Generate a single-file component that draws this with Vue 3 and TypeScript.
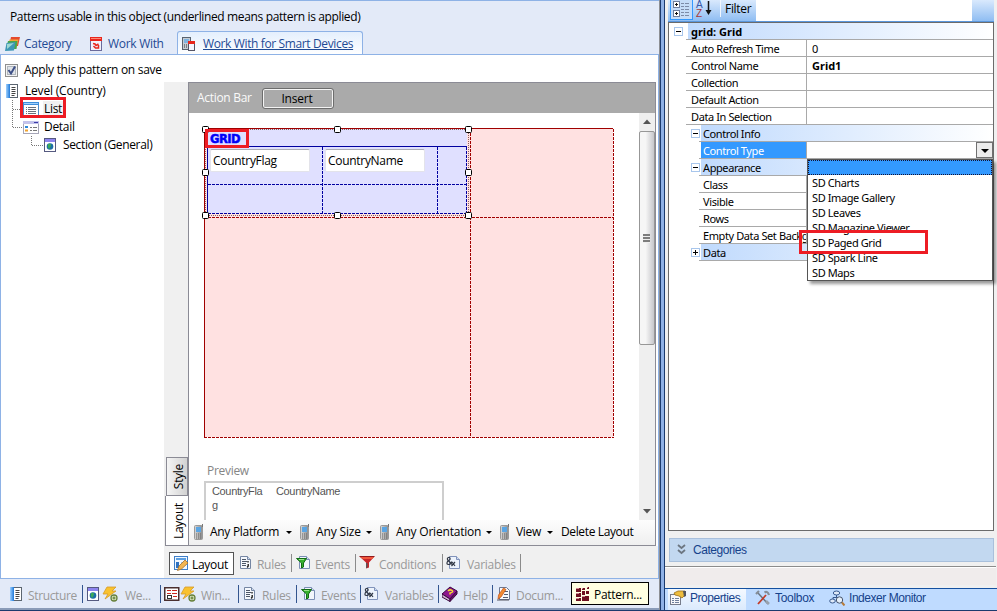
<script setup lang="ts">
interface PropertyRow {
  name: string
  value?: string
  level: 1 | 2
  group?: 'open' | 'closed'
  root?: boolean
  selected?: boolean
}

interface DocTab {
  key: string
  label: string
  icons: string[]
}

const rows: PropertyRow[] = [
  { name: 'grid: Grid', level: 1, group: 'open', root: true },
  { name: 'Auto Refresh Time', value: '0', level: 1 },
  { name: 'Control Name', value: 'Grid1', level: 1 },
  { name: 'Collection', level: 1 },
  { name: 'Default Action', level: 1 },
  { name: 'Data In Selection', level: 1 },
  { name: 'Control Info', level: 2, group: 'open' },
  { name: 'Control Type', level: 2, selected: true },
  { name: 'Appearance', level: 2, group: 'open' },
  { name: 'Class', level: 2 },
  { name: 'Visible', level: 2 },
  { name: 'Rows', level: 2 },
  { name: 'Empty Data Set Background', level: 2 },
  { name: 'Data', level: 2, group: 'closed' },
]

const controlTypes: string[] = [
  '', 'SD Charts', 'SD Image Gallery', 'SD Leaves', 'SD Magazine Viewer',
  'SD Paged Grid', 'SD Spark Line', 'SD Maps',
]

const partTabs: DocTab[] = [
  { key: 'rules', label: 'Rules', icons: ['rules'] },
  { key: 'events', label: 'Events', icons: ['events'] },
  { key: 'conditions', label: 'Conditions', icons: ['funnel'] },
  { key: 'variables', label: 'Variables', icons: ['vars'] },
]

const docTabs: DocTab[] = [
  { key: 'structure', label: 'Structure', icons: ['book'] },
  { key: 'web', label: 'We...', icons: ['webform', 'bolt'] },
  { key: 'win', label: 'Win...', icons: ['winform', 'bolt'] },
  { key: 'rules', label: 'Rules', icons: ['rules'] },
  { key: 'events', label: 'Events', icons: ['events'] },
  { key: 'variables', label: 'Variables', icons: ['vars'] },
  { key: 'help', label: 'Help', icons: ['help'] },
  { key: 'docum', label: 'Docum...', icons: ['doc'] },
]

const handles: [number, number][] = [
  [3, 3], [135, 3], [266, 3], [3, 46], [266, 46], [3, 89], [135, 89], [266, 89],
]
</script>

<template>
  <div class="app">
    <svg class="sprites" width="0" height="0">
      <defs>
        <linearGradient id="gPhone" x1="0" x2="1"><stop offset="0" stop-color="#d8d8d8" /><stop offset="1" stop-color="#8b8b8b" /></linearGradient>
        <linearGradient id="gBlue" x1="0" x2="1"><stop offset="0" stop-color="#9fd0ff" /><stop offset="1" stop-color="#1d78d8" /></linearGradient>
      </defs>
      <symbol id="i-category" viewBox="0 0 16 16">
        <path d="M6 1h9l-2 9H4z" fill="#e5492d" /><path d="M4.500 3.500h9l-2 8H3z" fill="#f3a53a" />
        <path d="M3 5h9.500l-1 8H1z" fill="#4aa64a" /><path d="M1.500 7l9-1-1.500 8.500L0 15z" fill="#3f97b5" /><path d="M2 8l7-1-7 6z" fill="#9fd8d2" />
      </symbol>
      <symbol id="i-workwith" viewBox="0 0 16 16">
        <rect x="1.500" y="1.500" width="11" height="13" fill="#f2f2fb" stroke="#6b6b9b" /><rect x="1" y="1" width="12" height="4" fill="#e8261c" /><path d="M2 2.500h10" stroke="#ff8b78" />
        <path d="M4 7.500l2 .5 1 1.500 2.500-1.500M4.500 10l2 2h3V9" fill="none" stroke="#e8261c" stroke-width="1.500" />
      </symbol>
      <symbol id="i-smart" viewBox="0 0 16 16">
        <rect x="1.500" y="1.500" width="8" height="12" fill="#c5ccd4" stroke="#59636f" /><rect x="3" y="3" width="5" height="4" fill="#7fb2e0" />
        <path d="M3 9h1m1 0h1M3 11h1m1 0h1" stroke="#333" /><rect x="7.500" y="5.500" width="6" height="9" fill="#f4f6ff" stroke="#556" /><rect x="7" y="5" width="7" height="3" fill="#e8261c" />
      </symbol>
      <symbol id="i-book" viewBox="0 0 16 16">
        <rect x="1.500" y="1.500" width="11" height="13" fill="#fff" stroke="#5b6570" /><rect x="1" y="1" width="4" height="14" fill="url(#gBlue)" />
        <path d="M6.500 4.500h4M6.500 6.500h4M6.500 8.500h4M6.500 10.500h4M6.500 12.500h3" stroke="#444" />
      </symbol>
      <symbol id="i-list" viewBox="0 0 16 16">
        <rect x=".5" y="1.500" width="15" height="13" fill="#fff" stroke="#4f8cc9" /><rect x="0" y="1" width="16" height="3" fill="#3f8fdc" /><path d="M1 2.500h14" stroke="#9fd0fa" />
        <path d="M3 6.500h1M3 8.500h1M3 10.500h1M3 12.500h1M5 6.500h8M5 8.500h8M5 10.500h8M5 12.500h8" stroke="#6a717b" />
      </symbol>
      <symbol id="i-detail" viewBox="0 0 16 16">
        <rect x=".5" y="2.500" width="15" height="12" fill="#fff" stroke="#a6a6b8" /><rect x="0" y="2" width="16" height="3" fill="#c2c2ea" /><path d="M11 3.500h4" stroke="#3b3ba8" />
        <path d="M2 8h3" stroke="#2b86d8" stroke-width="2" /><path d="M2 11.500h3" stroke="#efa22f" stroke-width="2" /><path d="M7 8.500h2m1 0h4M7 11.500h2m1 0h4" stroke="#777" />
      </symbol>
      <symbol id="i-webform" viewBox="0 0 16 16">
        <rect x="1.500" y="1.500" width="11" height="13" fill="#fff" stroke="#555a80" /><rect x="2" y="2" width="10" height="3" fill="#8d84ee" />
        <circle cx="7" cy="9.500" r="3.300" fill="#1c6fa6" /><path d="M5 7q3-1 3 1t-2 4q-2-2-1-5z" fill="#3ba95a" />
      </symbol>
      <symbol id="i-winform" viewBox="0 0 16 16">
        <rect x=".75" y="1.750" width="14" height="12.500" fill="#fff" stroke="#4a2f2f" stroke-width="1.500" /><path d="M3 4.500h4m1 0h5M3 7.500h4m1 0h5" stroke="#cc2a20" stroke-width="1.200" />
        <rect x="3.500" y="9.500" width="4" height="3" fill="#fff" stroke="#333" /><path d="M9 10.500h4" stroke="#cc2a20" />
      </symbol>
      <symbol id="i-bolt" viewBox="0 0 16 16">
        <path d="M5 1h9l-4 4h4L3 13l3-5H1z" fill="#f9c22f" stroke="#d69a2a" stroke-width=".8" />
        <circle cx="12" cy="12" r="3" fill="#f0f6da" stroke="#66803a" stroke-width="1.300" /><path d="M12 10.300v3.400M10.300 12h3.400" stroke="#517020" />
      </symbol>
      <symbol id="i-rules" viewBox="0 0 16 16">
        <path d="M1.500 1.500h7l3 3v9h-10z" fill="#f5f8fd" stroke="#7586a3" /><path d="M8.500 1.500v3h3" fill="#cfdcf0" stroke="#7586a3" />
        <path d="M3 4.500h4M3 6.500h5M3 8.500h4M3 10.500h4" stroke="#4d5768" /><path d="M9 6v1.500M9.200 9v2l-1 1.500" stroke="#222" stroke-width="1.400" fill="none" />
      </symbol>
      <symbol id="i-events" viewBox="0 0 16 16">
        <path d="M3.500 1.500h7l3 3v9h-10z" fill="#f2f6fc" stroke="#7b8fb5" /><path d="M10.500 1.500v3h3" fill="#cfdcf0" stroke="#7b8fb5" />
        <path d="M.5 3.500h10L7.500 8v4l-2 1V8z" fill="#36b02d" stroke="#116b16" /><path d="M3 4.500h5" stroke="#9be58b" />
      </symbol>
      <symbol id="i-funnel" viewBox="0 0 16 16">
        <path d="M.5 1.500h15L10 7.500v5l-3 1v-6z" fill="#c8262b" /><path d="M1 2h14l-2 2H4z" fill="#f0563a" /><path d="M7 8v5l1.500-.5V8z" fill="#5a5458" /><path d="M.5 1.500h15" stroke="#8f1a1e" />
      </symbol>
      <symbol id="i-vars" viewBox="0 0 16 16">
        <path d="M4.500 1.500h7l3 3v9h-10z" fill="#edf3fc" stroke="#8193bb" /><path d="M11.500 1.500v3h3" fill="#cfdcf0" stroke="#8193bb" />
        <path d="M7 9.500Q5 7 3 5.500 1.500 3 3.500 2.500t1.500 2L2.500 6.500Q1 9.500 3.500 9.500T7 6.500M6.500 11l3.500-4M7 7l3 4" fill="none" stroke="#333a48" stroke-width="1.200" />
      </symbol>
      <symbol id="i-help" viewBox="0 0 16 16">
        <path d="M0 8l8-7 7 4-7 8z" fill="#8d178d" stroke="#3d083f" /><path d="M0 8l8 5v2.500L0 11z" fill="#cfb8d2" stroke="#3d083f" /><path d="M8 13l7-8v3l-7 7.500z" fill="#65106a" stroke="#3d083f" />
        <path d="M6 5q2-2 4-.5T8 7v1.500" stroke="#f6dc31" stroke-width="1.500" fill="none" />
      </symbol>
      <symbol id="i-doc" viewBox="0 0 16 16">
        <path d="M3.500 1.500h7l3 3v9h-10z" fill="#f7f9fd" stroke="#6c7790" /><path d="M8 5.500h4M8 8.500h4M7 11.500h5" stroke="#555d70" />
        <path d="M7.500 2l2.500 1.500L5 11l-3 2 .5-4z" fill="#f28b32" stroke="#c05018" stroke-width=".7" /><path d="M1 14h12" stroke="#55555f" />
      </symbol>
      <symbol id="i-pattern" viewBox="0 0 16 16">
        <path d="M1 2h5v4H1zM7 2h3v2H7zM12 1h2v2h-2zM1 7h5v4H1zM7 5h3v4H7zM11 5h3v3h-3zM1 12h5v3H1zM7 10h7v5H7z" fill="#6e0f1e" />
        <path d="M1 2.500h3M7 2.500h1M12 1.500h1M1 7.500h3M1 12.500h3M7 10.500h3" stroke="#d08a94" />
      </symbol>
      <symbol id="i-layout" viewBox="0 0 16 16">
        <rect x="1.500" y="1.500" width="13" height="13" fill="#f2f8ff" stroke="#3f7fc8" /><rect x="3" y="3" width="10" height="2" fill="#5d9fe0" /><path d="M3 7h3v6H3z" fill="#2f72c0" /><path d="M8 7.500h5" stroke="#9cc0e8" />
        <path d="M12 5l3 3-6.500 6-4 1.500L6 11z" fill="#f2b552" stroke="#a5702a" stroke-width=".8" />
      </symbol>
      <symbol id="i-phone" viewBox="0 0 12 16">
        <rect x="1.500" y="1.500" width="8" height="14" rx="1" fill="url(#gPhone)" stroke="#9a9a9a" /><path d="M9.500 0v3" stroke="#777" /><rect x="3" y="3" width="5" height="5" fill="#5aa5e4" />
        <path d="M3 10h1m1 0h1m1 0h1M3 12h1m1 0h1m1 0h1M3 14h1m1 0h1m1 0h1" stroke="#666" />
      </symbol>
      <symbol id="i-props" viewBox="0 0 16 16">
        <rect x=".5" y="4.500" width="10" height="10" fill="#f7f7fa" stroke="#777c8b" /><path d="M2 8.500h2m1 0h4M2 10.500h2m1 0h4M2 12.500h2m1 0h4" stroke="#70809c" />
        <path d="M4 3l4-2h7v4l-3 3-3-2-4-1z" fill="#eebd3d" stroke="#9b6f19" stroke-width=".8" /><path d="M13 1h3v5l-2 1z" fill="#52545c" />
      </symbol>
      <symbol id="i-tools" viewBox="0 0 16 16">
        <path d="M3 3l10 11" stroke="#6a7684" stroke-width="1.500" /><path d="M11 5L3 14" stroke="#c33a26" stroke-width="1.800" /><path d="M1 4l3-3M9.500 2.500q3-2 4.500 2.500" stroke="#848d98" stroke-width="2.200" fill="none" /><path d="M11 11l3 3" stroke="#98a2ae" stroke-width="2.500" />
      </symbol>
      <symbol id="i-indexer" viewBox="0 0 16 16">
        <path d="M7.500 4v3M4 10V7.500h7" stroke="#35578d" fill="none" /><ellipse cx="7.500" cy="3" rx="3.200" ry="2" fill="#dfe9f7" stroke="#35578d" /><ellipse cx="3.500" cy="11" rx="2.800" ry="2" fill="#dfe9f7" stroke="#35578d" />
        <circle cx="10.500" cy="10" r="3.200" fill="#e6f0fa" stroke="#46536b" /><path d="M13 12.500l2.500 3" stroke="#b67a38" stroke-width="2" />
      </symbol>
    </svg>

    <section class="editor">
      <header class="head">
        <p class="title">Patterns usable in this object (underlined means pattern is applied)</p>
        <nav class="tabs">
          <a class="tab t-cat"><svg width="16" height="16"><use href="#i-category" /></svg><span>Category</span></a>
          <a class="tab t-ww"><svg width="16" height="16"><use href="#i-workwith" /></svg><span>Work With</span></a>
          <a class="tab t-sd"><svg width="16" height="16"><use href="#i-smart" /></svg><span>Work With for Smart Devices</span></a>
        </nav>
      </header>

      <div class="body">
        <div class="tree-side">
          <label class="apply">
            <svg width="13" height="13"><rect x=".5" y=".5" width="12" height="12" fill="#f4f4f4" stroke="#8e8f8f" /><rect x="2.500" y="2.500" width="8" height="8" fill="#dfe3e8" stroke="#b0b6bd" /><path d="M3.500 6l2.500 3.500L10 2.500" fill="none" stroke="#3d4f86" stroke-width="2" /></svg>
            <span>Apply this pattern on save</span>
          </label>
          <div class="tree">
            <svg class="tree-lines" width="50" height="60"><path d="M12.500 5v28M13 14.500h11M13 32.500h11M31.500 41v10M32 50.500h12" fill="none" stroke="#777" stroke-dasharray="1 1" /></svg>
            <div class="node"><svg width="16" height="16"><use href="#i-book" /></svg><span class="n-level">Level (Country)</span></div>
            <div class="node l1"><svg width="16" height="16"><use href="#i-list" /></svg><span class="hit">List</span><i class="mark mark-list"></i></div>
            <div class="node l1"><svg width="16" height="16"><use href="#i-detail" /></svg><span>Detail</span></div>
            <div class="node l2"><svg width="16" height="16"><use href="#i-webform" /></svg><span class="n-sec">Section (General)</span></div>
          </div>
        </div>

        <div class="designer">
          <div class="stage">
            <div class="side-tabs">
              <div class="side-tab style"><span>Style</span></div>
              <div class="side-tab layout"><span>Layout</span></div>
            </div>
            <div class="frame">
              <div class="action-bar"><span class="ab-label">Action Bar</span><button class="insert"><span>Insert</span></button></div>
              <div class="view">
                <div class="canvas">
                  <div class="board">
                    <svg class="lines" width="412" height="312" shape-rendering="crispEdges">
                      <rect x="2" y="2" width="409" height="309" fill="#ffe1e1" />
                      <rect x="5" y="3" width="260" height="84" fill="#e0e0ff" />
                      <g fill="none" stroke="#a00000">
                        <path d="M2 2.500h409M2.500 2v310" />
                        <path d="M411.500 3v309M2 311.500h410M268.500 3v309M2 91.500h410" stroke-dasharray="3 1" />
                      </g>
                      <g fill="none" stroke="#0000a0">
                        <path d="M5 20.500h260M5.500 20v68" />
                        <path d="M120.500 21v67M235.500 21v67M264.500 21v67M6 58.500h258M6 87.500h258" stroke-dasharray="3 1" />
                      </g>
                      <rect x="3.500" y="3.500" width="263" height="86" fill="none" stroke="#8a6060" stroke-dasharray="1 1" />
                    </svg>
                    <b class="grid-name">GRID</b>
                    <span class="field f1">CountryFlag</span>
                    <span class="field f2">CountryName</span>
                    <svg class="lines handles" width="412" height="312"><rect v-for="(h, i) in handles" :key="i" :x="h[0] - 2.5" :y="h[1] - 2.5" width="6" height="6" rx="1" fill="#fff" stroke="#000" /></svg>
                    <i class="mark mark-grid"></i>
                  </div>
                  <div class="preview-label">Preview</div>
                  <div class="preview"><span class="pv1">CountryFla<br>g</span><span class="pv2">CountryName</span></div>
                </div>
                <div class="scroll">
                  <svg width="16" height="17"><path d="M4 11l4-4.500 4 4.500z" fill="#555" /></svg>
                  <div class="thumb"><i></i><i></i><i></i></div>
                  <svg class="down" width="16" height="17"><path d="M4 6h8l-4 4.500z" fill="#555" /></svg>
                </div>
              </div>
              <div class="platform-bar">
                <svg width="12" height="16"><use href="#i-phone" /></svg><span class="p1">Any Platform</span><i class="caret"></i>
                <svg width="12" height="16"><use href="#i-phone" /></svg><span class="p2">Any Size</span><i class="caret"></i>
                <svg width="12" height="16"><use href="#i-phone" /></svg><span class="p3">Any Orientation</span><i class="caret"></i>
                <svg width="12" height="16"><use href="#i-phone" /></svg><span class="p4">View</span><i class="caret"></i>
                <span class="p5">Delete Layout</span>
              </div>
            </div>
          </div>
          <div class="part-tabs">
            <div class="part-active"><svg width="16" height="16"><use href="#i-layout" /></svg><span>Layout</span></div>
            <div v-for="t in partTabs" :key="t.key" class="part" :class="t.key">
              <svg v-for="i in t.icons" :key="i" width="16" height="16"><use :href="'#i-' + i" /></svg><span>{{ t.label }}</span>
            </div>
          </div>
        </div>
      </div>

      <footer class="doc-tabs">
        <div v-for="t in docTabs" :key="t.key" class="doc" :class="t.key">
          <svg v-for="i in t.icons" :key="i" width="16" height="16"><use :href="'#i-' + i" /></svg><span>{{ t.label }}</span>
        </div>
        <div class="doc-active"><svg width="16" height="16"><use href="#i-pattern" /></svg><span>Pattern...</span></div>
      </footer>
    </section>

    <div class="splitter"></div>

    <aside class="props">
      <div class="toolbar">
        <div class="tools">
          <div class="cat-btn">
            <svg width="22" height="19"><g fill="#fff" stroke="#6f7f9f"><rect x="2.500" y="1.500" width="6" height="6" /><rect x="2.500" y="10.500" width="6" height="6" /></g><path d="M4 4.500h3M5.500 3v3M4 13.500h3M5.500 12v3" stroke="#111" /><path d="M10 3.500h3m1 0h4M10 6.500h3m1 0h4M10 9.500h3m1 0h4M10 12.500h3m1 0h4M10 15.500h3m1 0h4" stroke="#7c8ba8" /></svg>
          </div>
          <div class="az"><span class="a">A</span><span class="z">Z</span></div>
          <svg class="arrow" width="9" height="17"><path d="M4.500 1v12" stroke="#111" stroke-width="1.500" /><path d="M1.500 10h6l-3 5z" fill="#111" /></svg>
          <span class="filter">Filter</span>
        </div>
        <div class="filter-box"></div>
        <div class="tool-end"></div>
      </div>

      <div class="sheet">
        <div v-for="r in rows" :key="r.name" class="row" :class="['lv' + r.level, { group: r.group, root: r.root, sel: r.selected }]">
          <span class="gutter"><i v-if="r.group" class="toggle" :class="r.group"></i></span>
          <span class="name">{{ r.name }}</span>
          <span v-if="!r.group" class="value" :class="{ bold: r.value === 'Grid1' }">{{ r.value }}<i v-if="r.selected" class="drop"></i></span>
        </div>
        <ul class="dropdown"><li v-for="(c, i) in controlTypes" :key="i" :class="{ hot: i === 0 }">{{ c }}</li></ul>
        <i class="mark mark-paged"></i>
      </div>

      <div class="categories">
        <svg width="9" height="11"><path d="M1 1l3.500 3L8 1M1 6l3.500 3L8 6" fill="none" stroke="#6c7681" stroke-width="1.800" /></svg><span>Categories</span>
      </div>
      <div class="desc"></div>
      <nav class="tool-tabs">
        <div class="tt on"><svg width="16" height="16"><use href="#i-props" /></svg><span>Properties</span></div>
        <div class="tt tb"><svg width="16" height="16"><use href="#i-tools" /></svg><span>Toolbox</span></div>
        <div class="tt im"><svg width="16" height="16"><use href="#i-indexer" /></svg><span>Indexer Monitor</span></div>
      </nav>
    </aside>
  </div>
</template>

<style>
body { margin: 0; overflow: hidden; }
</style>

<style scoped>
* { box-sizing: border-box; }
.app { display: flex; width: 997px; height: 611px; overflow: hidden; background: #f0f0f0; font: 12px/16px "Open Sans", "Noto Sans", sans-serif; letter-spacing: -0.3px; color: #000; white-space: nowrap; border-bottom: 1px solid #1b3a6e; }
.sprites { position: absolute; }
svg { display: block; flex: none; }
p, ul { margin: 0; padding: 0; list-style: none; }
.mark { position: absolute; border: 3px solid #ed1c24; }

.editor { width: 659px; display: flex; flex-direction: column; }
.head { height: 54px; background: #e3eaf8; border-top: 1px solid #8eb2e6; }
.title { height: 24px; padding: 8px 0 0 10px; letter-spacing: -0.36px; }
.tabs { display: flex; height: 24px; margin-top: 6px; align-items: stretch; color: #1f4a94; }
.tab { display: flex; align-items: center; padding-top: 2px; }
.tab span { margin-left: 3px; }
.t-cat { width: 84px; padding-left: 5px; }
.t-ww { width: 93px; padding-left: 5px; }
.t-sd { width: 186px; padding: 1px 0 0 3px; border: 1px solid #8eb2e6; border-bottom: 0; border-radius: 3px 3px 0 0; background: linear-gradient(#e4effd, #fff); letter-spacing: -0.37px; }
.t-sd span { margin-left: 6px; text-decoration: underline; }
.body { height: 524px; display: flex; border: 1px solid #8eb2e6; border-bottom: 0; background: #fff; }
.tree-side { width: 163px; }
.apply { display: flex; align-items: center; height: 16px; margin: 7px 0 0 4px; }
.apply span { margin-left: 6px; }
.tree { position: relative; margin-top: 4px; }
.tree-lines { position: absolute; left: -1px; top: 13px; }
.node { position: relative; display: flex; align-items: center; height: 18px; padding-left: 4px; }
.node svg { position: relative; }
.node span { margin-left: 4px; }
.node.l1 { padding-left: 22px; }
.node.l1 span { margin-left: 5px; }
.node.l1 .hit { margin-left: 4px; }
.node.l2 { padding-left: 42px; }
.hit { background: #f0f0f0; padding: 0 1px; }
.n-level { letter-spacing: -0.2px; }
.n-sec { letter-spacing: -0.35px; }
.mark-list { left: 19px; top: -3px; width: 46px; height: 21px; }

.designer { width: 494px; display: flex; flex-direction: column; padding-top: 27px; }
.stage { display: flex; height: 464px; width: 492px; }
.side-tabs { width: 24px; background: #f0f0f0; padding: 375px 0 0 1px; }
.side-tab { display: flex; align-items: center; justify-content: center; border: 1px solid #8b8b95; border-right: 0; padding-left: 3px; }
.side-tab span { writing-mode: vertical-rl; transform: rotate(180deg); }
.style { height: 39px; margin-left: 1px; border-right: 1px solid #8b8b95; background: linear-gradient(90deg, #f5f5f5, #d2d2d2); }
.layout { height: 50px; border-top: 0; background: #fff; }
.frame { width: 468px; border: 1px solid #8b8b95; display: flex; flex-direction: column; }
.action-bar { height: 30px; background: #aaa; display: flex; align-items: center; padding-left: 8px; color: #fafafa; }
.ab-label { width: 65px; }
.insert { width: 72px; height: 21px; margin-top: 1px; padding: 0 2px 0 0; font: inherit; letter-spacing: -0.2px; background: #aaa; border: 1px solid #6d6d6d; border-radius: 3px; box-shadow: inset 0 0 0 1px #f4f4f4; color: #000; }
.view { height: 407px; display: flex; }
.canvas { width: 450px; padding: 13px 0 0 13px; overflow: hidden; }
.board { position: relative; width: 412px; height: 312px; }
.lines { position: absolute; left: 0; top: 0; overflow: visible; }
.grid-name { position: absolute; left: 8px; top: 5px; font: 900 11.5px/16px "DejaVu Sans", sans-serif; letter-spacing: -0.5px; color: #0000f8; -webkit-text-stroke: 0.5px #0000f8; }
.mark-grid { left: 3px; top: 3px; width: 44px; height: 19px; }
.field { position: absolute; top: 23px; width: 100px; height: 23px; padding: 3px 2px; background: #fff; border: 1px solid #e3e3ea; border-top-color: #abadb3; border-radius: 2px; line-height: 15px; }
.f1 { left: 8px; }
.f2 { left: 123px; }
.preview-label { padding: 25px 0 0 5px; color: #858585; line-height: 16px; }
.preview { display: flex; width: 240px; height: 60px; margin: 2px 0 0 2px; border: 2px solid #cecece; padding: 1px 0 0 6px; color: #555; font: 11px/14px "Liberation Sans", sans-serif; letter-spacing: -0.35px; }
.pv1 { width: 64px; }
.scroll { width: 16px; background: #efefef; display: flex; flex-direction: column; }
.thumb { height: 214px; border: 1px solid #979797; border-radius: 2px; background: linear-gradient(90deg, #f6f6f6 40%, #c7c7cb); display: flex; flex-direction: column; align-items: center; justify-content: center; margin-top: 1px; padding-right: 1px; }
.thumb i { width: 7px; height: 3px; border-bottom: 1px solid #eee; border-top: 2px solid #7d7d7d; }
.down { margin-top: auto; }
.platform-bar { height: 25px; display: grid; align-items: center; background: linear-gradient(#fdfdfd, #efefef); padding: 0 0 1px 4px; grid-template-columns: 17px 76px 13px 17px 50px 13px 17px 90px 13px 17px 31px 14px 80px; letter-spacing: -0.3px; }
.p2 { letter-spacing: -0.15px; }
.p3 { letter-spacing: -0.2px; }
.platform-bar .p5 { letter-spacing: -0.37px; }
.caret { border: 3px solid transparent; border-top-color: #000; border-bottom: 0; width: 6px; }
.part-tabs { flex: 1; display: flex; align-items: center; background: #f0f0f0; color: #999; padding: 2px 0 0 5px; }
.part-active { display: flex; align-items: center; width: 65px; height: 23px; margin-right: 1px; border: 1px solid #555; background: #fff; color: #000; padding-left: 3px; }
.part-active span { margin: 3px 0 0 3px; }
.part { display: flex; align-items: center; height: 18px; padding-left: 4px; border-right: 1px solid #8b8b8b; }
.part span { margin: 4px 0 0 3px; }
.part.rules { width: 57px; }
.part.rules span { margin-left: 2px; }
.part.events { width: 64px; }
.part.events span { margin-left: 3px; }
.part.conditions { width: 87px; padding-left: 3px; }
.part.conditions span { margin-left: 4px; }
.part.variables { width: 78px; padding-left: 2px; }
.part.variables span { margin-left: 6px; }
.doc-tabs { height: 32px; display: flex; align-items: center; background: #e3eaf8; border-top: 1px solid #8eb2e6; border-bottom: 2px solid #8a9bb8; color: #999; }
.doc { display: flex; align-items: center; height: 18px; border-right: 1px solid #33558f; padding-left: 4px; }
.doc span { margin: 4px 0 0 3px; }
.doc.structure { width: 83px; padding-left: 9px; letter-spacing: -0.35px; }
.doc.web { width: 78px; padding-left: 3px; }
.doc.web span { margin-left: 7px; }
.doc.win { width: 78px; padding-left: 3px; }
.doc.win span { margin-left: 5px; }
.doc.rules { width: 58px; }
.doc.events { width: 64px; }
.doc.events span { margin-left: 4px; }
.doc.variables { width: 78px; padding-left: 2px; }
.doc.variables span { margin-left: 6px; }
.doc.help { width: 54px; padding-left: 3px; }
.doc.help span { margin-left: 5px; }
.doc.docum { width: 78px; border-right: 0; padding-left: 3px; }
.doc.docum span { margin-left: 4px; }
.doc-active { display: flex; align-items: center; width: 78px; height: 23px; background: #ffffe1; border: 1px solid #000; color: #000; padding-left: 3px; }
.doc-active span { margin: 3px 0 0 3px; }

.splitter { width: 6px; background: #8fb1e6; border-left: 1px solid #8d8f94; border-right: 1px solid #1b3a6e; box-shadow: inset 1px 0 #1b3a6e; }

.props { width: 332px; height: 610px; padding-left: 3px; display: flex; flex-direction: column; font: 11px/16px "Noto Sans", sans-serif; letter-spacing: -0.4px; }
.toolbar { width: 326px; height: 22px; display: flex; border-bottom: 1px solid #5a96dc; }
.tools { width: 88px; display: flex; background: linear-gradient(#d9e9fd, #8fbdf2); }
.cat-btn { width: 23px; height: 20px; margin-left: 2px; background: #c5dcf8; border: 1px solid #3399ff; border-top: 0; }
.az { width: 8px; display: flex; flex-direction: column; margin-left: 3px; font: 10px/9px "Liberation Sans", sans-serif; }
.a { color: #3758a8; }
.z { color: #a83737; }
.filter { margin: 0 0 0 7px; padding-left: 4px; border-left: 1px solid #f0f6ff; height: 17px; font: 12px/18px "Open Sans", sans-serif; letter-spacing: -0.3px; }
.filter-box { width: 216px; background: #fff; }
.tool-end { width: 22px; background: linear-gradient(#d9e9fd, #8fbdf2); }
.sheet { position: relative; width: 326px; height: 509px; border: 1px solid #6b6b6b; background: #fff; }
.row { display: flex; height: 17px; line-height: 16px; }
.lv1 { padding-left: 17px; }
.lv2 { padding-left: 30px; }
.gutter { position: relative; width: 2px; border-bottom: 1px solid #a9a9a9; }
.toggle { position: absolute; left: -8px; top: 4px; width: 9px; height: 9px; border: 1px solid #a8c6ec; background: #fff; }
.root .toggle { left: -12px; }
.toggle::before { content: ""; position: absolute; left: 1px; top: 3px; width: 5px; height: 1px; background: #000; }
.toggle.closed::after { content: ""; position: absolute; left: 3px; top: 1px; width: 1px; height: 5px; background: #000; }
.name { flex: none; width: 118px; padding: 1px 0 0 3px; overflow: hidden; border-bottom: 1px solid #a9a9a9; }
.lv2 .name { width: 105px; padding-left: 2px; }
.value { position: relative; flex: 1; border-left: 1px solid #a9a9a9; border-bottom: 1px solid #a9a9a9; padding: 1px 0 0 5px; }
.bold, .root .name { font-weight: bold; letter-spacing: 0; }
.group .name { flex: 1; background: linear-gradient(90deg, #c0dafd, #fff); }
.sel .name { background: #3399ff; color: #fff; }
.drop { position: absolute; right: 0; top: 0; width: 17px; height: 16px; border: 1px solid #707070; background: #ececec; }
.drop::after { content: ""; position: absolute; left: 4px; top: 6px; border: 4px solid transparent; border-top-color: #000; border-bottom: 0; }
.dropdown { position: absolute; left: 138px; top: 136px; width: 186px; height: 122px; border: 1px solid #555; background: #fff; box-shadow: 3px 3px 3px rgba(0, 0, 0, 0.4); line-height: 15px; }
.dropdown li { height: 15px; padding-left: 4px; }
.dropdown .hot { background: #3399ff; border: 1px dotted #113; }
.mark-paged { left: 130px; top: 207px; width: 129px; height: 24px; }
.categories { display: flex; align-items: center; width: 325px; height: 24px; margin: 7px 0 0 1px; padding: 0 0 1px 7px; background: #c2d8f0; border: 1px solid #a9c0dc; color: #15428b; }
.categories span { margin-left: 7px; }
.categories, .tool-tabs { font-family: "Liberation Sans", sans-serif; font-size: 12px; letter-spacing: -0.45px; }
.desc { height: 19px; margin: 4px 1px 3px -3px; border-top: 1px solid #8c8c8c; background: #f0ecec; box-shadow: inset 0 1px #fff; }
.tool-tabs { flex: 1; display: flex; margin-left: -3px; padding-left: 3px; background: #bfdbff; border-top: 1px solid #15509f; color: #15428b; }
.tt { display: flex; align-items: center; padding-bottom: 3px; }
.tt span { margin-left: 4px; }
.on { width: 78px; padding-left: 2px; background: linear-gradient(#f4f9ff, #dbeafd); }
.tb { width: 75px; padding-left: 9px; letter-spacing: -0.3px; }
.im { padding-left: 8px; letter-spacing: -0.45px; }
</style>
